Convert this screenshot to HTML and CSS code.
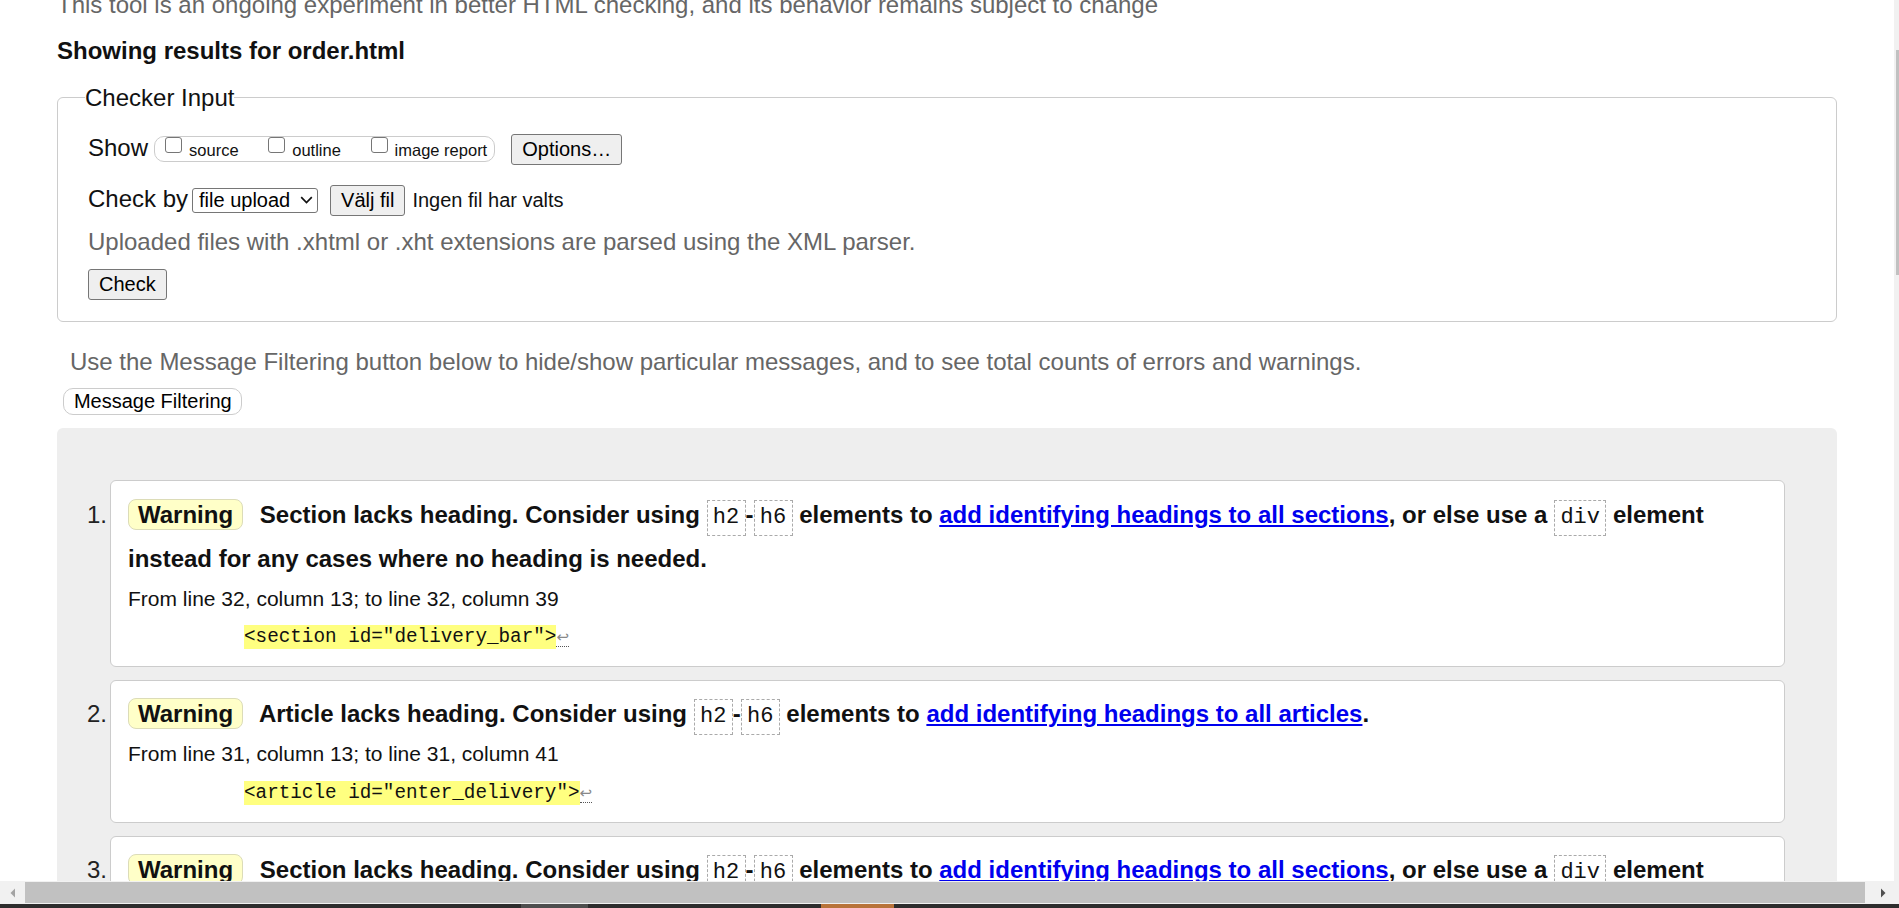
FILE: index.html
```html
<!DOCTYPE html>
<html lang="en">
<head>
<meta charset="utf-8">
<title>Nu Html Checker</title>
<link rel="stylesheet" href="styles.css">
</head>
<body>
<div class="page">
  <p class="intro">This tool is an ongoing experiment in better HTML checking, and its behavior remains subject to change</p>
  <h2 class="results-title">Showing results for order.html</h2>

  <fieldset class="checker">
    <legend>Checker Input</legend>
    <div class="row row-show">
      <span class="row-label">Show</span>
      <span class="showopts">
        <label class="opt"><input type="checkbox">source</label><label class="opt"><input type="checkbox">outline</label><label class="opt"><input type="checkbox">image report</label>
      </span>
      <button class="btn btn-options" type="button">Options…</button>
    </div>
    <div class="row row-checkby">
      <span class="row-label">Check by</span>
      <span class="select-wrap">
        <select class="select"><option>file upload</option></select>
        <svg class="chevron" width="13" height="8" viewBox="0 0 13 8"><polyline points="1.2,1.2 6.5,6.5 11.8,1.2" fill="none" stroke="#111" stroke-width="1.7"/></svg>
      </span>
      <button class="btn btn-file" type="button">Välj fil</button>
      <span class="nofile">Ingen fil har valts</span>
    </div>
    <p class="hint">Uploaded files with .xhtml or .xht extensions are parsed using the XML parser.</p>
    <button class="btn btn-check" type="submit">Check</button>
  </fieldset>

  <p class="filter-hint">Use the Message Filtering button below to hide/show particular messages, and to see total counts of errors and warnings.</p>
  <button class="btn-filter" type="button">Message Filtering</button>

  <div class="results">
    <ol class="messages">
      <li class="msg">
        <span class="num">1.</span>
        <div class="card">
          <p class="msg-text"><span class="badge">Warning</span> Section lacks heading. Consider using <code class="kw">h2</code>-<code class="kw">h6</code> elements to <a href="#">add identifying headings to all sections</a>, or else use a <code class="kw">div</code> element instead for any cases where no heading is needed.</p>
          <p class="loc">From line 32, column 13; to line 32, column 39</p>
          <p class="extract"><code class="src"><mark>&lt;section id="delivery_bar"&gt;</mark><span class="lf">↩</span></code></p>
        </div>
      </li>
      <li class="msg">
        <span class="num">2.</span>
        <div class="card">
          <p class="msg-text"><span class="badge">Warning</span> Article lacks heading. Consider using <code class="kw">h2</code>-<code class="kw">h6</code> elements to <a href="#">add identifying headings to all articles</a>.</p>
          <p class="loc">From line 31, column 13; to line 31, column 41</p>
          <p class="extract"><code class="src"><mark>&lt;article id="enter_delivery"&gt;</mark><span class="lf">↩</span></code></p>
        </div>
      </li>
      <li class="msg">
        <span class="num">3.</span>
        <div class="card">
          <p class="msg-text"><span class="badge">Warning</span> Section lacks heading. Consider using <code class="kw">h2</code>-<code class="kw">h6</code> elements to <a href="#">add identifying headings to all sections</a>, or else use a <code class="kw">div</code> element instead for any cases where no heading is needed.</p>
          <p class="loc">From line 45, column 13; to line 45, column 37</p>
          <p class="extract"><code class="src"><mark>&lt;section id="order_bar"&gt;</mark><span class="lf">↩</span></code></p>
        </div>
      </li>
    </ol>
  </div>
</div>

<div class="vscroll"><div class="vthumb"></div></div>
<div class="hscroll">
  <svg class="harrow harrow-left" width="6" height="10" viewBox="0 0 6 10"><polygon points="5,0.5 5,9.5 0.5,5" fill="#a3a3a3"/></svg>
  <div class="hthumb"></div>
  <svg class="harrow harrow-right" width="6" height="10" viewBox="0 0 6 10"><polygon points="1,0.5 1,9.5 5.5,5" fill="#505050"/></svg>
</div>
<div class="taskbar"><span class="tb-seg tb-grey"></span><span class="tb-seg tb-orange"></span></div>
</body>
</html>
```

FILE: styles.css
```css
* { box-sizing: border-box; }

html, body {
  margin: 0;
  height: 100%;
  overflow: hidden;
  background: #fff;
}

body {
  font-family: "Liberation Sans", Arial, sans-serif;
  font-size: 24px;
  color: #111;
}

.page {
  width: 1780px;
  margin-left: 57px;
}

.intro {
  margin: -9px 0 0;
  line-height: 28px;
  color: #666;
  white-space: nowrap;
}

.results-title {
  margin: 18.4px 0 0;
  font-size: 24px;
  line-height: 28px;
  font-weight: bold;
}

/* Checker input fieldset */
.checker {
  margin: 18.6px 0 0;
  padding: 21.6px 29px 21px 30px;
  border: 1px solid #ccc;
  border-radius: 6px;
  min-width: 0;
}

.checker legend {
  margin-left: -3px;
  padding: 0;
  font-size: 24px;
  line-height: 28px;
}

.row {
  display: flex;
  align-items: baseline;
  white-space: nowrap;
}

.row-show { margin-bottom: 20.4px; }

.row-label {
  line-height: 28px;
}

.showopts {
  display: block;
  height: 26px;
  margin-left: 6px;
  padding: 0 7px 0 10px;
  border: 1px solid #ccc;
  border-radius: 10px;
  font-size: 16.5px;
  line-height: 20px;
}

.opt + .opt { margin-left: 29.7px; }

.opt input {
  -webkit-appearance: none;
  appearance: none;
  display: inline-block;
  vertical-align: baseline;
  width: 17px;
  height: 16px;
  margin: 0 7px 3px 0;
  border: 1px solid #767676;
  border-radius: 3px;
  background: #fff;
}

.btn {
  font-family: "Liberation Sans", Arial, sans-serif;
  font-size: 20px;
  line-height: 23px;
  padding: 3px 10px;
  border: 1px solid #767676;
  border-radius: 3px;
  background: #efefef;
  color: #000;
}

.btn-options { margin-left: 16px; }

.select-wrap {
  position: relative;
  display: block;
  margin-left: 4px;
}

.select {
  -webkit-appearance: none;
  appearance: none;
  display: block;
  width: 126px;
  height: 25px;
  padding: 0 22px 0 6px;
  font-family: "Liberation Sans", Arial, sans-serif;
  font-size: 20px;
  line-height: 23px;
  color: #000;
  background: #fff;
  border: 1px solid #767676;
  border-radius: 3px;
}

.chevron {
  position: absolute;
  right: 5.5px;
  top: 8px;
}

.btn-file { margin-left: 12px; }

.nofile {
  margin-left: 7px;
  font-size: 20px;
  line-height: 23px;
}

.hint {
  margin: 12.4px 0 0;
  line-height: 28px;
  color: #666;
}

.btn-check {
  display: block;
  margin-top: 12.6px;
}

/* Filter area */
.filter-hint {
  margin: 25.7px 0 0;
  padding-left: 13px;
  line-height: 28px;
  color: #666;
  white-space: nowrap;
}

.btn-filter {
  display: block;
  margin: 12px 0 0 6.4px;
  padding: 1px 9.5px;
  font-family: "Liberation Sans", Arial, sans-serif;
  font-size: 20px;
  line-height: 23px;
  color: #000;
  background: #fff;
  border: 1px solid #ccc;
  border-radius: 10px;
}

/* Results */
.results {
  margin-top: 13px;
  padding: 52.3px 52px 40px 30px;
  background: #eee;
  border-radius: 6px;
}

.messages {
  margin: 0;
  padding: 0;
  list-style: none;
}

.msg {
  display: flex;
  align-items: baseline;
  margin-bottom: 13px;
}

.num {
  flex: 0 0 23px;
  line-height: 28px;
  color: #222;
}

.card {
  flex: 1 1 auto;
  min-width: 0;
  background: #fff;
  border: 1px solid #ccc;
  border-radius: 6px;
  padding: 11.6px 17px 17.5px 17px;
}

.msg-text {
  margin: 0;
  font-weight: bold;
  line-height: 44px;
}

.badge {
  display: inline-block;
  margin-right: 10px;
  padding: 1px 9px;
  line-height: 27px;
  background: #ffffc8;
  border: 1px solid #dcdcb8;
  border-radius: 8px;
}

.kw {
  display: inline-block;
  padding: 0 5.3px;
  font-family: "Liberation Mono", "DejaVu Sans Mono", monospace;
  font-size: 22px;
  font-weight: normal;
  line-height: 34px;
  border: 1px dashed #aaa;
  background: #fff;
}

.msg-text a {
  color: #0000ee;
  text-decoration: underline;
}

.loc {
  margin: 6px 0 0;
  font-size: 21px;
  line-height: 24px;
}

.extract {
  margin: 12.8px 0 0;
  padding-left: 116px;
  line-height: 22px;
}

.src {
  font-family: "Liberation Mono", "DejaVu Sans Mono", monospace;
  font-size: 19.3px;
}

.src mark {
  padding: 1px 0;
  background: #ffff80;
  color: #111;
}

.lf {
  font-family: "DejaVu Sans", sans-serif;
  font-size: 15px;
  color: #888;
  border-bottom: 1px dotted #555;
}

/* Window chrome overlays */
.vscroll {
  position: fixed;
  top: 0;
  right: 0;
  width: 5px;
  height: 881px;
  background: #f1f1f1;
}

.vthumb {
  position: absolute;
  top: 50px;
  left: 2px;
  right: 0;
  height: 225px;
  background: #c1c1c1;
}

.hscroll {
  position: fixed;
  left: 0;
  right: 0;
  top: 881px;
  height: 23px;
  background: #f1f1f1;
}

.hthumb {
  position: absolute;
  left: 25px;
  width: 1840px;
  top: 1px;
  bottom: 1px;
  background: #c1c1c1;
}

.harrow {
  position: absolute;
  top: 6.5px;
}

.harrow-left { left: 10px; }
.harrow-right { left: 1880px; }

.taskbar {
  position: fixed;
  left: 0;
  right: 0;
  top: 904px;
  height: 4px;
  background: #2d2d2d;
}

.tb-seg {
  position: absolute;
  top: 0;
  bottom: 0;
}

.tb-grey { left: 521px; width: 67px; background: #4e4e4e; }
.tb-orange { left: 821px; width: 73px; background: #b8733a; }
```
